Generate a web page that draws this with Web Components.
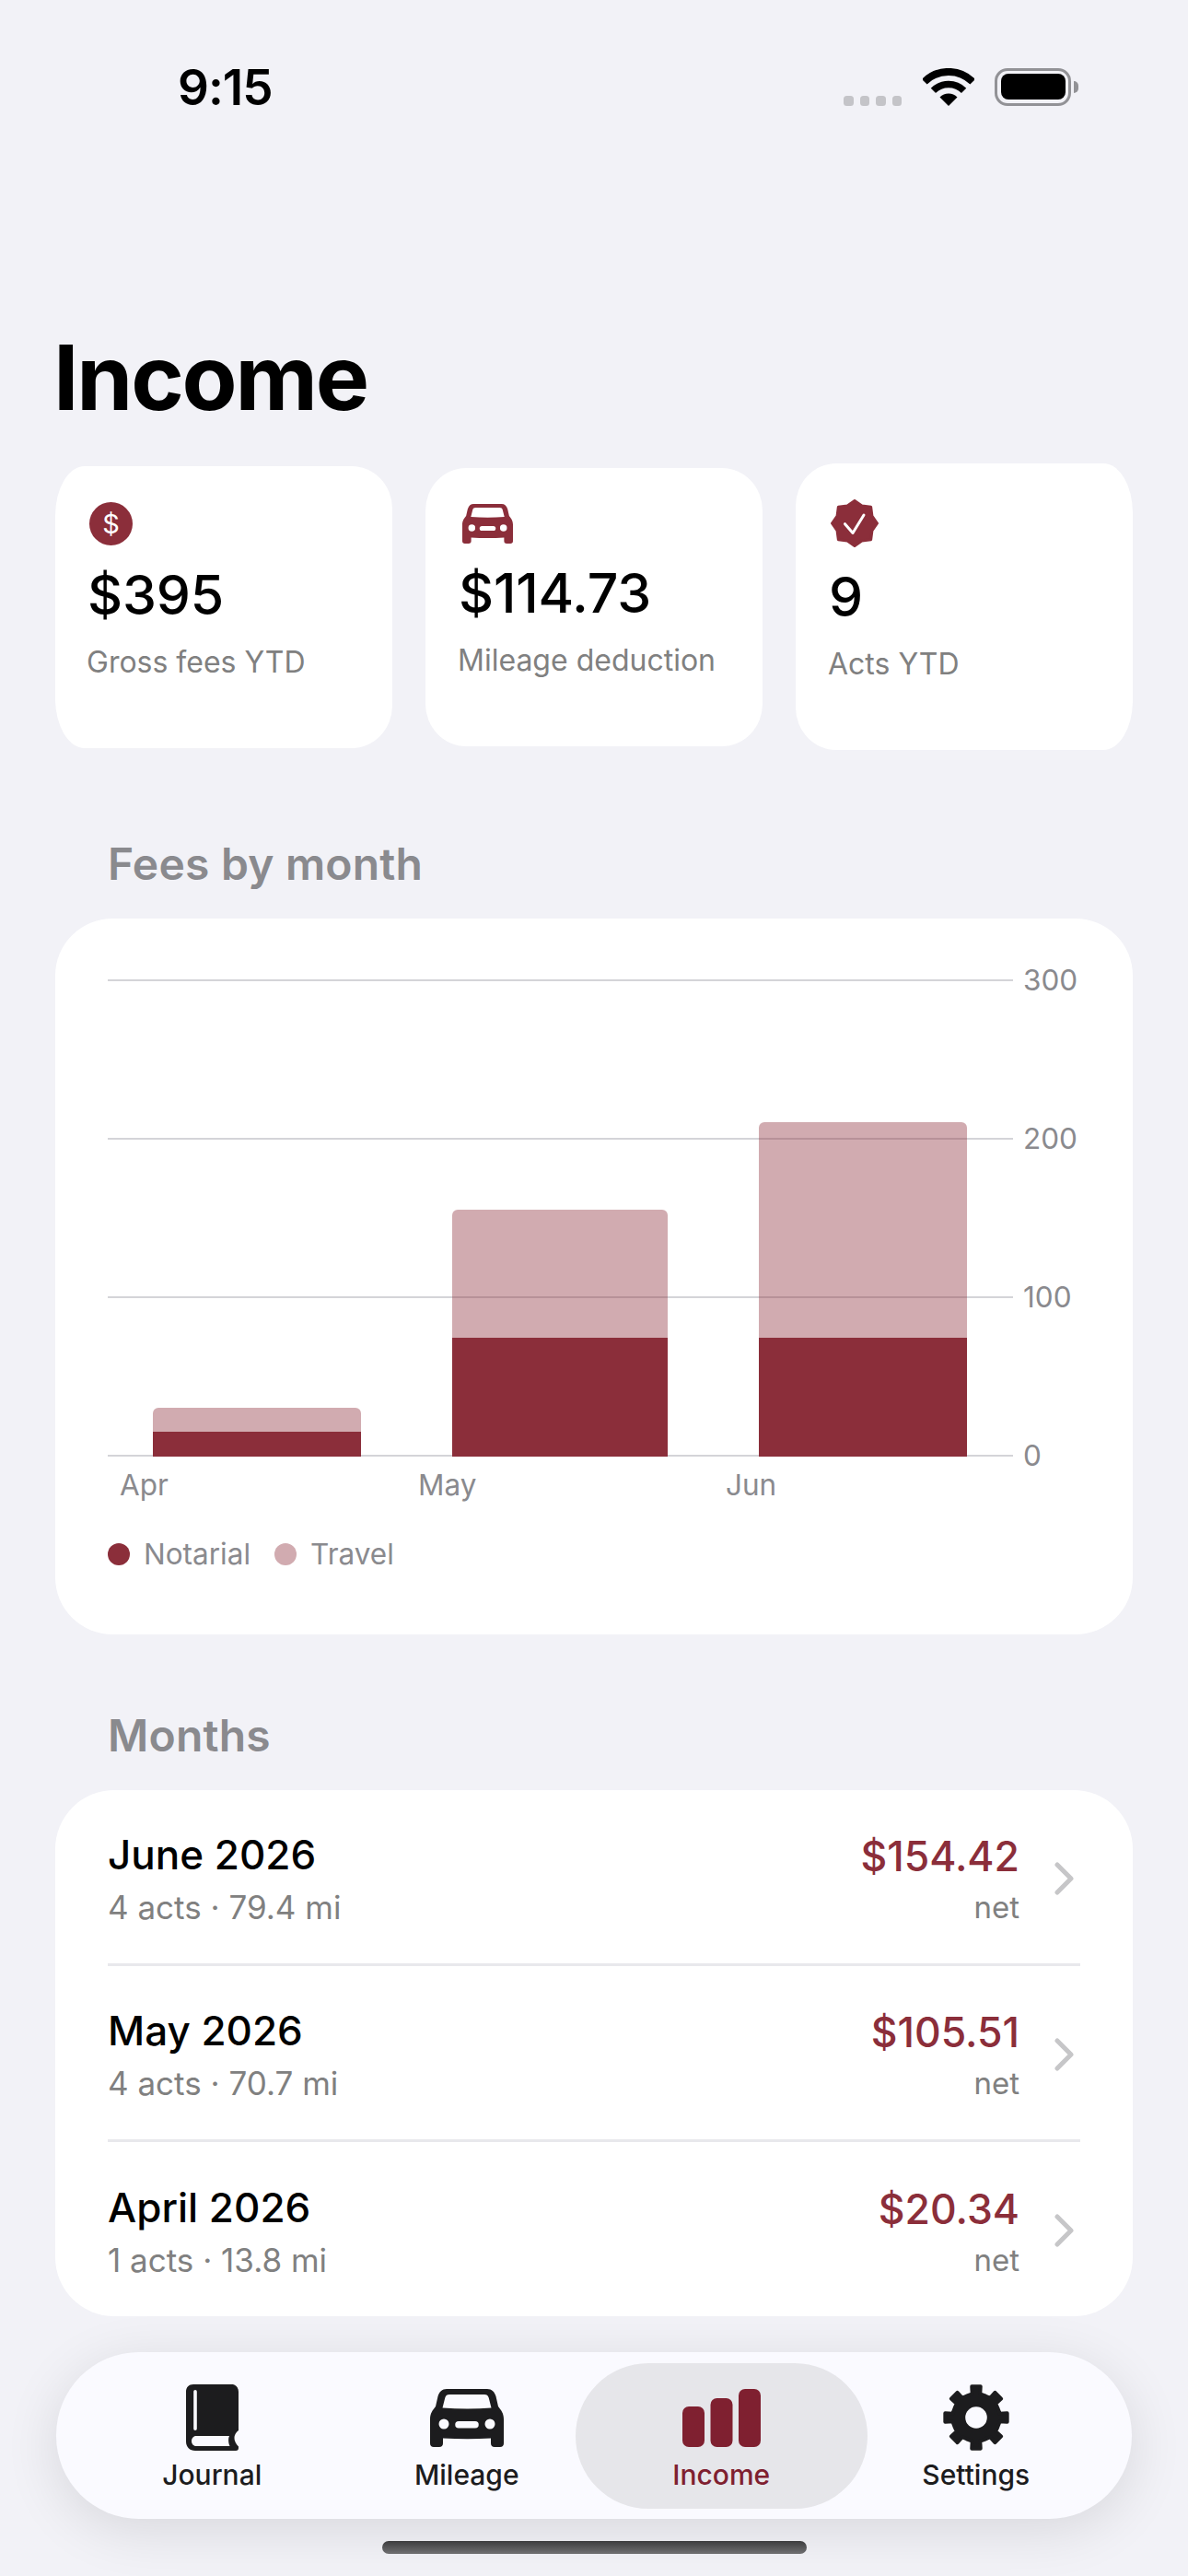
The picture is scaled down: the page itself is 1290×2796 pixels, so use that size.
<!DOCTYPE html>
<html lang="en">
<head>
<meta charset="utf-8">
<title>Income</title>
<style>
  html, body { margin: 0; background: #f2f2f7; }
  body { font-family: Inter, "Liberation Sans", sans-serif; color: #000; }
</style>
</head>
<body>
<income-screen>
  <status-bar slot="status">9:15</status-bar>
  <page-title slot="title">Income</page-title>
  <stat-card slot="stats" icon="dollar" value="$395" corners="left">Gross fees YTD</stat-card>
  <stat-card slot="stats" icon="car" value="$114.73">Mileage deduction</stat-card>
  <stat-card slot="stats" icon="seal" value="9" corners="right">Acts YTD</stat-card>
  <section-title slot="chart-title">Fees by month</section-title>
  <fee-chart slot="chart"></fee-chart>
  <section-title slot="months-title">Months</section-title>
  <month-list slot="months">
    <month-row name="June 2026" detail="4 acts · 79.4 mi" net="$154.42"></month-row>
    <month-row name="May 2026" detail="4 acts · 70.7 mi" net="$105.51"></month-row>
    <month-row name="April 2026" detail="1 acts · 13.8 mi" net="$20.34"></month-row>
  </month-list>
  <tab-bar slot="tabs">
    <tab-item icon="book">Journal</tab-item>
    <tab-item icon="car">Mileage</tab-item>
    <tab-item icon="bars" active>Income</tab-item>
    <tab-item icon="gear">Settings</tab-item>
  </tab-bar>
</income-screen>

<script>
// Round-cornered star outline, used for the gear teeth and the seal
function starPoints(list) {
    return list.map(p => {
        const a = (p[0] - 90) * Math.PI / 180;
        return (p[1] * Math.cos(a)).toFixed(2) + ',' + (p[1] * Math.sin(a)).toFixed(2);
    }).join(' ');
}

function gearPoints() {
    const pts = [];
    for (let i = 0; i < 8; i++) {
        const c = i * 45;
        pts.push([c - 21, 25.5], [c - 9.5, 26], [c - 8, 34], [c + 8, 34], [c + 9.5, 26]);
    }
    return starPoints(pts);
}

function sealPoints() {
    const pts = [];
    for (let i = 0; i < 8; i++) {
        const c = i * 45;
        pts.push([c, i % 2 ? 25 : 24.5], [c + 22.5, 20.5]);
    }
    return starPoints(pts);
}

const CAR = 'M18 0H62C67 0 70 3 71.5 8L74 19C77 23 80 26 80 33V59C80 61.5 78.5 63 76 63H70C67.5 63 66 61.5 66 59V53.5Q40 55 14 53.5V59C14 61.5 12.5 63 10 63H4C1.5 63 0 61.5 0 59V33C0 26 3 23 6 19L8.5 8C10 3 13 0 18 0Z'
    + 'M21 6C18.5 6 17 7 16.3 9.5L13.5 20.5Q40 22.5 66.5 20.5L63.7 9.5C63 7 61.5 6 59 6Z'
    + 'M15 32.5a5.5 5.5 0 1 0 0 11a5.5 5.5 0 1 0 0-11Z'
    + 'M65 32.5a5.5 5.5 0 1 0 0 11a5.5 5.5 0 1 0 0-11Z'
    + 'M31 35a3.5 3.5 0 0 0 0 7.5H49a3.5 3.5 0 0 0 0-7.5Z';

const BOOK = 'M8 0H49C54 0 57 3 57 8V50C54.5 52 52.5 54.5 52.5 58C52.5 62 54.5 65 57 67.5V69C57 71 56 72 54 72H10C4 72 0 68 0 62V8C0 3 3 0 8 0Z'
    + 'M11 56C8 56 6 58.5 6 61.5S8 67 11 67H47.5C46 64 45.5 59 47 56Z'
    + 'M10 6a1.8 1.8 0 0 0-1.8 1.8V48.2a1.8 1.8 0 0 0 3.6 0V7.8A1.8 1.8 0 0 0 10 6Z';

const ICONS = {
    car: { w: 80, h: 63, body: `<path fill="currentColor" fill-rule="evenodd" d="${CAR}"/>` },
    book: { w: 57, h: 72, body: `<path fill="currentColor" fill-rule="evenodd" d="${BOOK}"/>` },
    bars: { w: 85, h: 63, body: `<g fill="currentColor"><rect x="0" y="19" width="24" height="44" rx="7"/><rect x="30.5" y="10" width="24" height="53" rx="7"/><rect x="61" y="0" width="24" height="63" rx="7"/></g>` },
    gear: { w: 72, h: 72, body: `<g transform="translate(36 36)"><polygon fill="currentColor" stroke="currentColor" stroke-width="4" stroke-linejoin="round" points="${gearPoints()}"/><circle r="11.8" fill="#fafaff"/></g>` },
    seal: { w: 52, h: 52, body: `<g transform="translate(26 26)"><polygon fill="currentColor" stroke="currentColor" stroke-width="3" stroke-linejoin="round" points="${sealPoints()}"/><polyline points="-10.5,0.7 -2,10.5 10,-9" fill="none" stroke="#fff" stroke-width="3" stroke-linecap="round" stroke-linejoin="round"/></g>` }
};

class AppIcon extends HTMLElement {
    connectedCallback() {
        if (this.shadowRoot) return;
        this.attachShadow({ mode: 'open' });
        const icon = ICONS[this.getAttribute('name')];
        const w = this.getAttribute('width') || icon.w;
        const h = this.getAttribute('height') || icon.h;
        this.shadowRoot.innerHTML = `
            <style>:host { display: block; line-height: 0; } svg { display: block; }</style>
            <svg width="${w}" height="${h}" viewBox="0 0 ${icon.w} ${icon.h}" preserveAspectRatio="none">${icon.body}</svg>`;
    }
}
customElements.define('app-icon', AppIcon);

class StatusBar extends HTMLElement {
    constructor() {
        super();
        this.attachShadow({ mode: 'open' });
        this.shadowRoot.innerHTML = `
            <style>
                :host { display: flex; align-items: center; justify-content: space-between; height: 188px; padding: 0 119px 0 193px; box-sizing: border-box; }
                .time { font: 600 53px/60px Inter, "Liberation Sans", sans-serif; letter-spacing: -1px; position: relative; top: 1px; }
                .right { display: flex; align-items: flex-end; }
                .dots { display: flex; gap: 7px; margin-right: 23px; }
                .dots i { width: 10.5px; height: 11px; border-radius: 3.5px; background: #c4c4c8; }
                .battery { margin-left: 22px; width: 83px; height: 41px; box-sizing: border-box; border: 3.5px solid #929296; border-radius: 14px; padding: 3.5px; display: flex; margin-right: 8px; position: relative; }
                .battery b { flex: 1; background: #000; border-radius: 8px; }
                .battery::after { content: ""; position: absolute; right: -11px; top: 11px; width: 5px; height: 13px; background: #929296; border-radius: 0 6px 6px 0; }
            </style>
            <span class="time"><slot></slot></span>
            <div class="right">
                <div class="dots"><i></i><i></i><i></i><i></i></div>
                <svg width="56" height="41" viewBox="0 0 56 41" fill="none" stroke="#000">
                    <path d="M1.8 14.8A37 37 0 0 1 54.2 14.8" stroke-width="8"/>
                    <path d="M11.4 24.4A23.5 23.5 0 0 1 44.6 24.4" stroke-width="7.5"/>
                    <path d="M28 41L18.5 31.5A13.5 13.5 0 0 1 37.5 31.5Z" fill="#000" stroke="none"/>
                </svg>
                <div class="battery"><b></b></div>
            </div>`;
    }
}
customElements.define('status-bar', StatusBar);

class PageTitle extends HTMLElement {
    constructor() {
        super();
        this.attachShadow({ mode: 'open' });
        this.shadowRoot.innerHTML = `
            <style>:host { display: block; margin: 162px 0 33px 58px; font: 700 98px/120px Inter, "Liberation Sans", sans-serif; letter-spacing: -2.2px; }</style>
            <slot></slot>`;
    }
}
customElements.define('page-title', PageTitle);

class StatCard extends HTMLElement {
    constructor() {
        super();
        this.attachShadow({ mode: 'open' });
        const icon = this.getAttribute('icon');
        const glyph = icon === 'dollar'
            ? '<span class="coin">$</span>'
            : icon === 'car'
                ? '<app-icon name="car" width="55" height="43" style="margin-left:2px"></app-icon>'
                : '<app-icon name="seal"></app-icon>';
        this.shadowRoot.innerHTML = `
            <style>
                :host { display: flex; flex-direction: column; align-items: flex-start; width: 366px; box-sizing: border-box; padding: 39px 0 73px 38px; background: #fff; border-radius: 44px / 46px; color: #8b2e3a; }
                :host([corners="left"]) { padding-left: 37px; border-radius: 32px 44px 44px 32px / 54px 46px 46px 54px; }
                :host([corners="right"]) { border-radius: 44px 32px 32px 44px / 46px 54px 54px 46px; }
                .coin { width: 47px; height: 47px; border-radius: 50%; background: #8b2e3a; color: #fff; display: flex; align-items: center; justify-content: center; font: 400 29px/1 Inter, sans-serif; }
                .value { margin-top: 19px; margin-left: -2px; font: 500 59px/70px Inter, "Liberation Sans", sans-serif; color: #000; letter-spacing: -.2px; }
                .label { margin-top: 18px; margin-left: -3px; font: 400 32px/40px Inter, "Liberation Sans", sans-serif; color: #808080; }
            </style>
            ${glyph}
            <div class="value">${this.getAttribute('value')}</div>
            <div class="label"><slot></slot></div>`;
    }
}
customElements.define('stat-card', StatCard);

class SectionTitle extends HTMLElement {
    constructor() {
        super();
        this.attachShadow({ mode: 'open' });
        this.shadowRoot.innerHTML = `
            <style>:host { display: block; padding-left: 117px; margin-bottom: 29px; font: 600 48px/60px Inter, "Liberation Sans", sans-serif; letter-spacing: .2px; color: #8a8a8e; }</style>
            <slot></slot>`;
    }
}
customElements.define('section-title', SectionTitle);

class FeeChart extends HTMLElement {
    constructor() {
        super();
        this.attachShadow({ mode: 'open' });
        const rows = [300, 200, 100, 0].map(v => `<div class="row"><i></i><span>${v}</span></div>`).join('');
        this.shadowRoot.innerHTML = `
            <style>
                :host { display: block; box-sizing: border-box; margin: 0 60px; padding: 47px 59px 67px 57px; background: #fff; border-radius: 62px; font: 400 31.5px/40px Inter, "Liberation Sans", sans-serif; color: #8a8a8e; }
                .plot { position: relative; }
                .row { display: flex; align-items: center; height: 40px; margin-bottom: 132px; }
                .row:nth-child(4) { margin-bottom: 0; }
                .row i { flex: 1; height: 2px; background: #d4d4d8; }
                .row span { width: 71px; box-sizing: border-box; padding-left: 11px; }
                .bars { position: absolute; left: 49px; top: 20px; height: 517px; display: flex; align-items: flex-end; }
                .bar { display: flex; flex-direction: column; width: 226px; }
                .bar.wide { width: 234px; margin: 0 99px; }
                .bar b { display: block; background: #8b2e3a; }
                .bar b.travel { opacity: .4; border-radius: 6px 6px 0 0; }
                .months { display: grid; grid-template-columns: 324px 334px 1fr; padding-left: 13px; line-height: 24px; }
                .legend { display: flex; align-items: center; margin-top: 43px; }
                .dot { width: 24px; height: 24px; border-radius: 50%; background: #8b2e3a; margin-right: 15px; }
                .dot.light { background: #d1abb0; margin-left: 26px; }
            </style>
            <div class="plot">
                ${rows}
                <div class="bars">
                    <div class="bar"><b class="travel" style="height:26px"></b><b style="height:27px"></b></div>
                    <div class="bar wide"><b class="travel" style="height:139px"></b><b style="height:129px"></b></div>
                    <div class="bar"><b class="travel" style="height:234px"></b><b style="height:129px"></b></div>
                </div>
            </div>
            <div class="months"><span>Apr</span><span>May</span><span>Jun</span></div>
            <div class="legend"><span class="dot"></span><span>Notarial</span><span class="dot light"></span><span>Travel</span></div>`;
    }
}
customElements.define('fee-chart', FeeChart);

class MonthList extends HTMLElement {
    constructor() {
        super();
        this.attachShadow({ mode: 'open' });
        this.shadowRoot.innerHTML = `
            <style>:host { display: block; margin: 0 60px; padding: 0 57px; background: #fff; border-radius: 64px; }</style>
            <slot></slot>`;
    }
}
customElements.define('month-list', MonthList);

class MonthRow extends HTMLElement {
    constructor() {
        super();
        this.attachShadow({ mode: 'open' });
        this.shadowRoot.innerHTML = `
            <style>
                :host { display: flex; align-items: center; box-sizing: border-box; height: 191px; padding-top: 9px; border-bottom: 3px solid #e8e8ec; font-family: Inter, "Liberation Sans", sans-serif; }
                :host(:last-child) { border-bottom: 0; height: 189px; }
                .left, .right { display: flex; flex-direction: column; padding-top: 3px; }
                .left { flex: 1; }
                .right { align-items: flex-end; }
                .name { font: 500 44px/54px Inter, "Liberation Sans", sans-serif; }
                .detail { font: 400 35px/60px Inter, "Liberation Sans", sans-serif; color: #808080; }
                .net { font: 500 44.5px/54px Inter, "Liberation Sans", sans-serif; color: #8b2e3a; }
                .sub { font: 400 33px/56px Inter, "Liberation Sans", sans-serif; color: #808080; }
                svg { margin: 0 7px 0 38px; display: block; position: relative; top: -3px; }
            </style>
            <div class="left">
                <div class="name">${this.getAttribute('name')}</div>
                <div class="detail">${this.getAttribute('detail')}</div>
            </div>
            <div class="right">
                <div class="net">${this.getAttribute('net')}</div>
                <div class="sub">net</div>
            </div>
            <svg width="21" height="36" viewBox="0 0 21 36" fill="none" stroke="#c6c6c8" stroke-width="5" stroke-linecap="round" stroke-linejoin="round"><path d="M3 3L18 18L3 33"/></svg>`;
    }
}
customElements.define('month-row', MonthRow);

class TabItem extends HTMLElement {
    constructor() {
        super();
        this.attachShadow({ mode: 'open' });
        this.shadowRoot.innerHTML = `
            <style>
                :host { position: relative; flex: 1; display: flex; flex-direction: column; align-items: center; color: #1c1c1e; font: 500 30px/36px Inter, "Liberation Sans", sans-serif; }
                :host([active]) { color: #7f2030; }
                :host([active])::before { content: ""; position: absolute; left: -20px; right: -20px; top: -23px; bottom: 11px; border-radius: 79px; background: #e6e6ea; }
                .glyph { position: relative; height: 72px; display: flex; align-items: center; }
                .text { position: relative; margin-top: 8px; }
            </style>
            <div class="glyph"><app-icon name="${this.getAttribute('icon')}"></app-icon></div>
            <div class="text"><slot></slot></div>`;
    }
}
customElements.define('tab-item', TabItem);

class TabBar extends HTMLElement {
    constructor() {
        super();
        this.attachShadow({ mode: 'open' });
        this.shadowRoot.innerHTML = `
            <style>
                :host { position: absolute; left: 61px; top: 2553px; width: 1168px; height: 181px; box-sizing: border-box; padding: 35px 31px 0; display: flex; background: #fafaff; border-radius: 90px; box-shadow: 0 12px 60px rgba(0, 0, 0, .11); }
            </style>
            <slot></slot>`;
    }
}
customElements.define('tab-bar', TabBar);

class IncomeScreen extends HTMLElement {
    constructor() {
        super();
        this.attachShadow({ mode: 'open' });
        this.shadowRoot.innerHTML = `
            <style>
                :host { display: block; position: relative; width: 1290px; height: 2796px; overflow: hidden; background: #f2f2f7; }
                .stats { display: flex; align-items: center; gap: 36px; padding: 0 60px; margin-bottom: 94px; }
                .months { margin-top: 80px; }
                .home { position: absolute; left: 415px; top: 2758px; width: 461px; height: 14px; border-radius: 7px; background: linear-gradient(#3c3c3e, #707072); }
            </style>
            <slot name="status"></slot>
            <slot name="title"></slot>
            <div class="stats"><slot name="stats"></slot></div>
            <slot name="chart-title"></slot>
            <slot name="chart"></slot>
            <div class="months"><slot name="months-title"></slot></div>
            <slot name="months"></slot>
            <slot name="tabs"></slot>
            <div class="home"></div>`;
    }
}
customElements.define('income-screen', IncomeScreen);
</script>
</body>
</html>
